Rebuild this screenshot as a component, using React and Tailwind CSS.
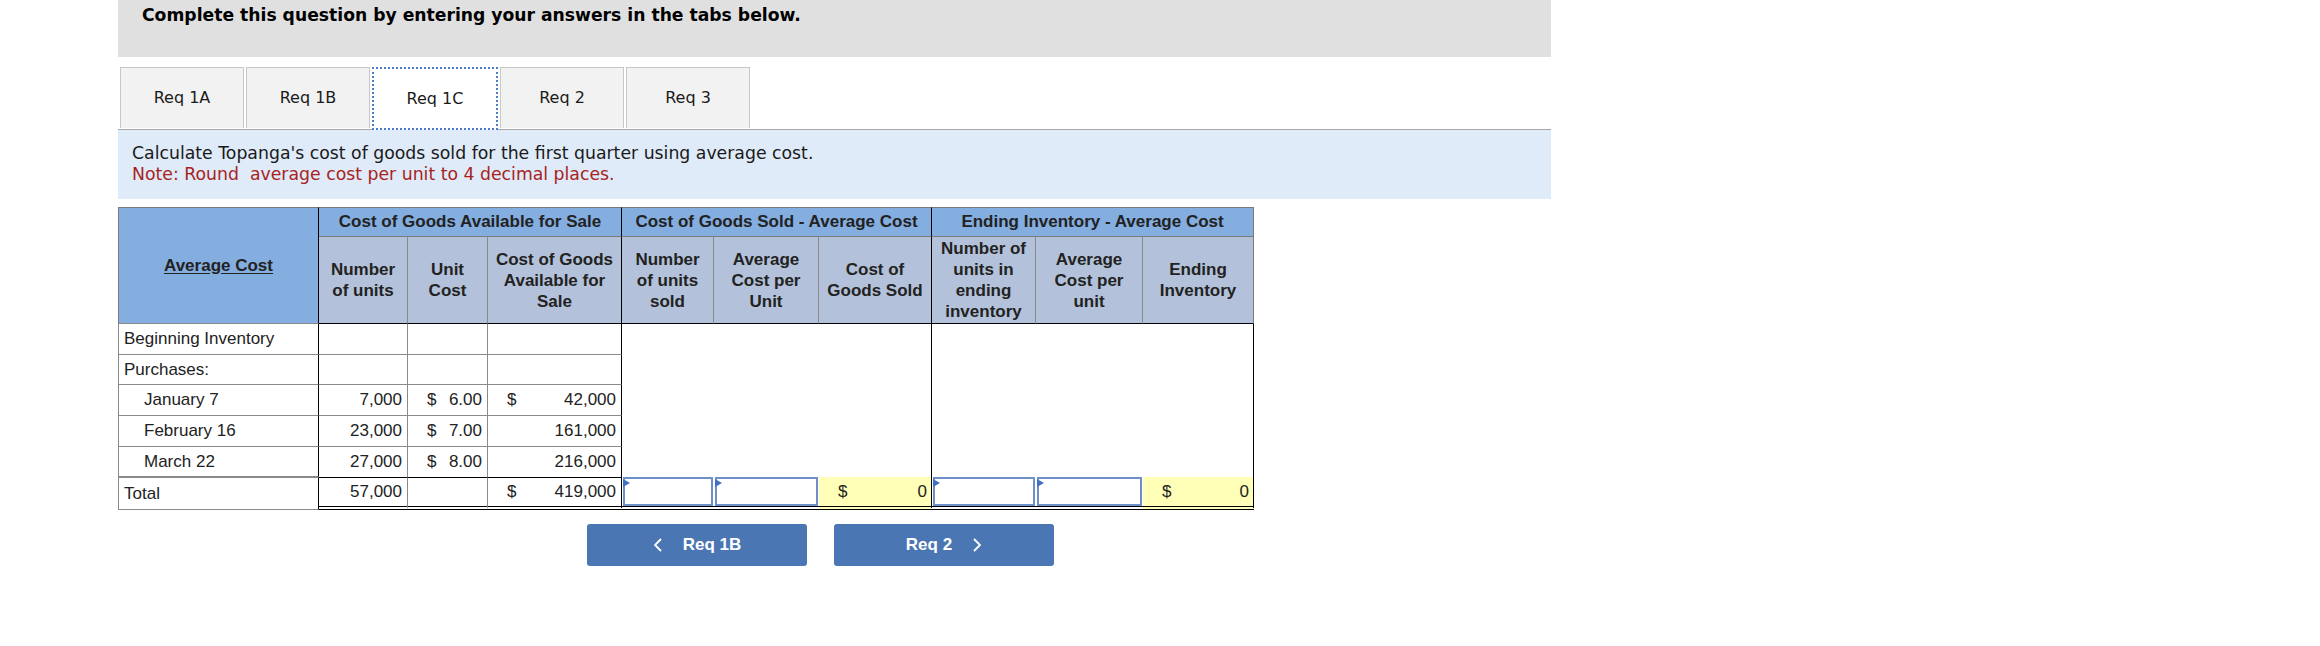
import React from 'react';

const tabs = ['Req 1A', 'Req 1B', 'Req 1C', 'Req 2', 'Req 3'];

const purchases = [
  { label: 'Beginning Inventory', indent: false },
  { label: 'Purchases:', indent: false },
  { label: 'January 7', indent: true, units: '7,000', cost: '6.00', total: '42,000', dollar: true },
  { label: 'February 16', indent: true, units: '23,000', cost: '7.00', total: '161,000' },
  { label: 'March 22', indent: true, units: '27,000', cost: '8.00', total: '216,000' },
];

const rowHeights = ['h-[31px]', 'h-[30px]', 'h-[31px]', 'h-[31px]', 'h-[30px]'];

// sub headers, written out line by line like the original sheet
const subHeaders = [
  { lines: ['Number', 'of units'], edge: 'gray' },
  { lines: ['Unit', 'Cost'], edge: 'gray' },
  { lines: ['Cost of Goods', 'Available for', 'Sale'], edge: 'black' },
  { lines: ['Number', 'of units', 'sold'], edge: 'gray' },
  { lines: ['Average', 'Cost per', 'Unit'], edge: 'gray' },
  { lines: ['Cost of', 'Goods Sold'], edge: 'black' },
  { lines: ['Number of', 'units in', 'ending', 'inventory'], edge: 'gray' },
  { lines: ['Average', 'Cost per', 'unit'], edge: 'gray' },
  { lines: ['Ending', 'Inventory'], edge: 'outer' },
];

const edgeClass = {
  gray: 'border-r border-r-[#8a8a8a]',
  black: 'border-r border-r-black',
  outer: 'border-r border-r-[#7a7a7a]',
};

function InputCell() {
  return (
    <td className="p-0 border-b-4 border-double border-black align-top">
      <div className="relative h-[29px] mx-px border-2 border-[#6d90c9] bg-white">
        <span className="absolute -left-[2px] top-0 w-0 h-0 border-y-[4px] border-y-transparent border-l-[7px] border-l-[#3f72c4]" />
      </div>
    </td>
  );
}

function YellowCell() {
  return (
    <td className="p-0 bg-[#ffffb8] border-b-4 border-double border-black border-r border-r-black">
      <div className="flex justify-between pl-[19px] pr-[4px]">
        <span>$</span>
        <span>0</span>
      </div>
    </td>
  );
}

export default function App() {
  const sub = 'bg-[#b3c2da] font-bold leading-[21px] text-center align-middle border-b border-b-black px-[2px] whitespace-nowrap';
  const group = 'bg-[#84ade0] font-bold text-center border-t border-t-[#7a7a7a] border-b border-b-[#7a7a7a]';

  return (
    <div className="min-h-[646px] bg-white text-[#1f1f1f]">
      {/* Header band */}
      <div className="ml-[118px] w-[1433px] h-[57px] bg-[#e0e0e0] pl-[24px] pt-[4px] font-['DejaVu_Sans',Verdana,sans-serif] text-[17.2px] leading-[22px] font-bold text-black">
        Complete this question by entering your answers in the tabs below.
      </div>

      <div className="ml-[118px] w-[1433px] font-['DejaVu_Sans',Verdana,sans-serif]">
        {/* Tabs */}
        <div className="mt-[10px] flex gap-[2px] pl-[2px] border-b border-[#a8a8a8]">
          {tabs.map(t =>
            t === 'Req 1C' ? (
              <div key={t} className="relative -mb-px w-[126px] h-[63px] bg-white border-2 border-dotted border-[#4c7dc8] flex items-center justify-center text-[16px] text-[#1a1a1a]">
                {t}
              </div>
            ) : (
              <div key={t} className="w-[124px] h-[61px] bg-[#f2f2f2] border border-b-0 border-[#c8c8c8] flex items-center justify-center text-[16px] text-[#1a1a1a]">
                {t}
              </div>
            )
          )}
        </div>

        {/* Instructions */}
        <div className="bg-[#dfebf8] px-[14px] pt-[13px] pb-[14px] text-[17.3px] leading-[21px]">
          <p className="text-[#1a1a1a]">Calculate Topanga's cost of goods sold for the first quarter using average cost.</p>
          <p className="text-[#a8231e] whitespace-pre">Note: Round  average cost per unit to 4 decimal places.</p>
        </div>

        {/* Table */}
        <table className="mt-[8px] w-[1136px] table-fixed border-separate border-spacing-0 font-['Liberation_Sans',Arial,sans-serif] text-[17px] text-[#222]">
          <colgroup>
            <col className="w-[201px]" />
            <col className="w-[89px]" />
            <col className="w-[80px]" />
            <col className="w-[134px]" />
            <col className="w-[92px]" />
            <col className="w-[105px]" />
            <col className="w-[113px]" />
            <col className="w-[104px]" />
            <col className="w-[107px]" />
            <col className="w-[111px]" />
          </colgroup>
          <thead>
            <tr className="h-[30px]">
              <th rowSpan={2} className="bg-[#84ade0] font-bold text-center border-t border-l border-t-[#7a7a7a] border-l-[#7a7a7a] border-r border-r-black border-b border-b-[#8a8a8a]">
                <span className="underline underline-offset-2">Average Cost</span>
              </th>
              <th colSpan={3} className={`${group} border-r border-r-black`}>Cost of Goods Available for Sale</th>
              <th colSpan={3} className={`${group} border-r border-r-black`}>Cost of Goods Sold - Average Cost</th>
              <th colSpan={3} className={`${group} border-r border-r-[#7a7a7a]`}>Ending Inventory - Average Cost</th>
            </tr>
            <tr className="h-[87px]">
              {subHeaders.map((h, i) => (
                <th key={i} className={`${sub} ${edgeClass[h.edge]}`}>
                  {h.lines.map((l, j) => (
                    <div key={j}>{l}</div>
                  ))}
                </th>
              ))}
            </tr>
          </thead>
          <tbody>
            {purchases.map((r, i) => (
              <tr key={r.label} className={rowHeights[i]}>
                <td className={`border-l border-l-[#8a8a8a] border-r border-r-black border-b border-b-[#8a8a8a] whitespace-nowrap ${r.indent ? 'pl-[25px]' : 'pl-[5px]'}`}>
                  {r.label}
                </td>
                <td className={`text-right pr-[5px] border-r border-r-[#8a8a8a] ${i < 4 ? 'border-b border-b-[#8a8a8a]' : ''}`}>{r.units}</td>
                <td className={`border-r border-r-[#8a8a8a] ${i < 4 ? 'border-b border-b-[#8a8a8a]' : ''}`}>
                  {r.cost && (
                    <div className="flex justify-between pl-[19px] pr-[5px]">
                      <span>$</span>
                      <span>{r.cost}</span>
                    </div>
                  )}
                </td>
                <td className={`border-r border-r-black ${i < 4 ? 'border-b border-b-[#8a8a8a]' : ''}`}>
                  {r.total && (
                    <div className="flex justify-between pl-[19px] pr-[5px]">
                      <span>{r.dollar ? '$' : ''}</span>
                      <span>{r.total}</span>
                    </div>
                  )}
                </td>
                {i === 0 && (
                  <>
                    <td colSpan={3} rowSpan={5} className="border-r border-r-black bg-white" />
                    <td colSpan={3} rowSpan={5} className="border-r border-r-black bg-white" />
                  </>
                )}
              </tr>
            ))}
            <tr className="h-[31px]">
              <td className="pl-[5px] border-l border-l-[#8a8a8a] border-r border-r-black border-b border-b-[#8a8a8a] border-t border-t-[#8a8a8a]">Total</td>
              <td className="text-right pr-[5px] border-t border-t-black border-r border-r-[#8a8a8a] border-b-4 border-double border-b-black">57,000</td>
              <td className="border-t border-t-black border-r border-r-[#8a8a8a] border-b-4 border-double border-b-black" />
              <td className="border-t border-t-black border-r border-r-black border-b-4 border-double border-b-black">
                <div className="flex justify-between pl-[19px] pr-[5px]">
                  <span>$</span>
                  <span>419,000</span>
                </div>
              </td>
              <InputCell />
              <InputCell />
              <YellowCell />
              <InputCell />
              <InputCell />
              <YellowCell />
            </tr>
          </tbody>
        </table>

        {/* Navigation buttons */}
        <div className="mt-[14px] ml-[469px] flex gap-[27px] font-['Liberation_Sans',Arial,sans-serif] text-[17px] font-bold text-white">
          <button className="w-[220px] h-[42px] rounded-[3px] bg-[#4a76b3] flex items-center justify-center gap-[20px]">
            <svg width="10" height="14" viewBox="0 0 10 14" fill="none">
              <polyline points="8,1 2,7 8,13" stroke="white" strokeWidth="1.8" />
            </svg>
            <span>Req 1B</span>
          </button>
          <button className="w-[220px] h-[42px] rounded-[3px] bg-[#4a76b3] flex items-center justify-center gap-[20px]">
            <span>Req 2</span>
            <svg width="10" height="14" viewBox="0 0 10 14" fill="none">
              <polyline points="2,1 8,7 2,13" stroke="white" strokeWidth="1.8" />
            </svg>
          </button>
        </div>
      </div>
    </div>
  );
}
